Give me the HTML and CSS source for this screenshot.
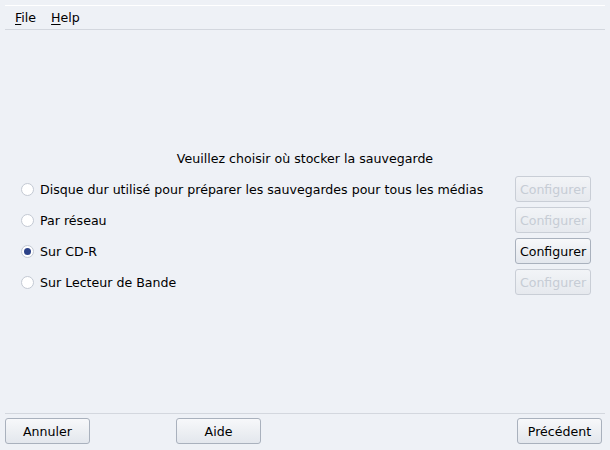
FILE: index.html
```html
<!DOCTYPE html>
<html>
<head>
<meta charset="utf-8">
<link rel="stylesheet" href="styles.css">
</head>
<body>
<div class="window">
  <div class="topline"></div>
  <div class="menubar">
    <span class="menu"><u>F</u>ile</span>
    <span class="menu"><u>H</u>elp</span>
  </div>
  <div class="sep"></div>
  <div class="content">
    <div class="title">Veuillez choisir où stocker la sauvegarde</div>
    <div class="options">
      <div class="row">
        <span class="radio"></span>
        <span class="label">Disque dur utilisé pour préparer les sauvegardes pour tous les médias</span>
        <button class="btn cfg" disabled>Configurer</button>
      </div>
      <div class="row">
        <span class="radio"></span>
        <span class="label">Par réseau</span>
        <button class="btn cfg" disabled>Configurer</button>
      </div>
      <div class="row">
        <span class="radio checked"></span>
        <span class="label">Sur CD-R</span>
        <button class="btn cfg">Configurer</button>
      </div>
      <div class="row">
        <span class="radio"></span>
        <span class="label">Sur Lecteur de Bande</span>
        <button class="btn cfg" disabled>Configurer</button>
      </div>
    </div>
  </div>
  <div class="sep bottom-sep"></div>
  <div class="footer">
    <button class="btn foot">Annuler</button>
    <button class="btn foot aide">Aide</button>
    <span class="spacer"></span>
    <button class="btn foot">Précédent</button>
  </div>
</div>
</body>
</html>
```
FILE: styles.css
```css
html, body {
  margin: 0;
  padding: 0;
  background: #eef1f6;
}
body {
  font-family: "DejaVu Sans", sans-serif;
  font-size: 12.6px;
  color: #000;
  width: 610px;
  height: 450px;
  overflow: hidden;
}
.window {
  display: flex;
  flex-direction: column;
  height: 450px;
}
.topline {
  margin: 5px 5px 0 5px;
  height: 1px;
  background: #ffffff;
}
.menubar {
  display: flex;
  gap: 15px;
  padding: 3px 0 0 15px;
  height: 18px;
  line-height: 18px;
}
.menu u {
  text-decoration: underline;
  text-underline-offset: 2px;
}
.sep {
  height: 1px;
  margin: 2px 5px 0 5px;
  background: #d3d7de;
}
.content {
  flex: 1;
  display: flex;
  flex-direction: column;
}
.title {
  text-align: center;
  margin-top: 120px;
  height: 20px;
  line-height: 18px;
}
.options {
  margin-top: 6px;
  display: flex;
  flex-direction: column;
  gap: 5px;
  padding: 0 19px 0 21px;
}
.row {
  display: flex;
  align-items: center;
  height: 26px;
}
.radio {
  width: 11px;
  height: 11px;
  border: 1px solid #c3c9d3;
  border-radius: 50%;
  background: #ffffff;
  position: relative;
  flex: none;
}
.radio.checked::after {
  content: "";
  position: absolute;
  left: 2px;
  top: 2px;
  width: 7px;
  height: 7px;
  border-radius: 50%;
  background: #2c4288;
}
.label {
  margin-left: 6px;
  flex: 1;
}
.btn {
  font-family: "DejaVu Sans", sans-serif;
  font-size: 12.6px;
  color: #000;
  border: 1px solid #a9b1bd;
  border-radius: 3px;
  background: linear-gradient(#f7f8fa, #e3e7ed);
  padding: 0;
  height: 26px;
}
.btn:disabled {
  color: #c6ccd5;
  border-color: #c9ced6;
  background: linear-gradient(#f2f4f7, #e6e9ee);
}
.cfg {
  width: 76px;
}
.bottom-sep {
  margin-top: 0;
  margin-bottom: 4px;
  background: #d3d7de;
}
.footer {
  display: flex;
  padding: 0 8px 6px 5px;
}
.foot {
  width: 85px;
  height: 26px;
}
.aide {
  margin-left: 86px;
}
.spacer {
  flex: 1;
}
```
